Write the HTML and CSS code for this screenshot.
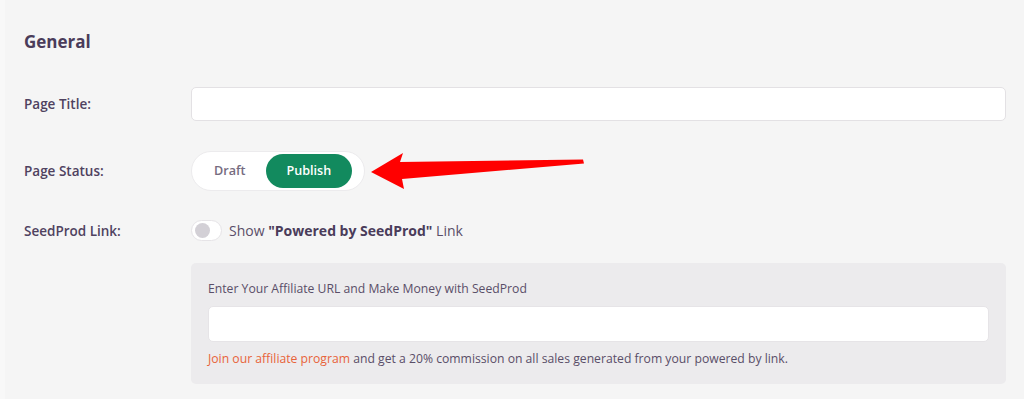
FILE: index.html
```html
<!DOCTYPE html>
<html>
<head>
<meta charset="utf-8">
<link rel="stylesheet" href="styles.css">
</head>
<body>
<div class="page">
  <h2 class="title">General</h2>
  <div class="row row-title">
    <div class="label">Page Title:</div>
    <div class="field"><div class="input"></div></div>
  </div>
  <div class="row row-status">
    <div class="label">Page Status:</div>
    <div class="field">
      <div class="seg">
        <span class="seg-opt">Draft</span>
        <span class="seg-opt active">Publish</span>
      </div>
    </div>
  </div>
  <div class="row row-link">
    <div class="label">SeedProd Link:</div>
    <div class="field switch-line">
      <span class="switch"><span class="knob"></span></span>
      <span class="show">Show <b>"Powered by SeedProd"</b> Link</span>
    </div>
  </div>
  <div class="row row-aff">
    <div class="label"></div>
    <div class="field">
      <div class="aff">
        <div class="aff-label">Enter Your Affiliate URL and Make Money with SeedProd</div>
        <div class="input aff-input"></div>
        <div class="aff-note"><span class="link">Join our affiliate program</span> and get a 20% commission on all sales generated from your powered by link.</div>
      </div>
    </div>
  </div>
  <svg class="arrow" width="1024" height="399" viewBox="0 0 1024 399">
    <polygon points="371,172 403,153 400,162 583,159.5 584,163.5 402,179 404,189" fill="#ff0000"/>
  </svg>
</div>
</body>
</html>
```
FILE: styles.css
```css
html, body {
  margin: 0;
  padding: 0;
}
body {
  background: #f5f5f5;
  font-family: "Open Sans", "Liberation Sans", sans-serif;
  color: #4a3c5a;
  width: 1024px;
  height: 399px;
  overflow: hidden;
}
.page {
  position: relative;
  border-left: 5px solid #f8f8f8;
  padding: 29px 18px 0 19px;
  height: 399px;
  box-sizing: border-box;
}
.title {
  margin: 0;
  font-size: 17px;
  font-weight: 700;
  line-height: 26px;
  color: #4a3c5a;
}
.row {
  display: grid;
  grid-template-columns: 167px 815px;
  align-items: center;
}
.label {
  font-size: 13.5px;
  font-weight: 600;
  color: #4f4260;
}
.row-title {
  margin-top: 32px;
}
.input {
  height: 34px;
  box-sizing: border-box;
  background: #fff;
  border: 1px solid #e3e1e4;
  border-radius: 5px;
}
.row-status {
  margin-top: 30px;
}
.seg {
  display: inline-flex;
  align-items: center;
  background: #fff;
  border: 1px solid #ecebed;
  border-radius: 20px;
  padding: 2px 12px 2px 2px;
  height: 40px;
  box-sizing: border-box;
}
.seg-opt {
  font-size: 12.6px;
  font-weight: 600;
  color: #766c80;
  padding: 0 20px 0 20px;
  line-height: 34px;
}
.seg-opt.active {
  background: #128a5e;
  color: #fff;
  border-radius: 17px;
  padding: 0 21px;
}
.row-link {
  margin-top: 29px;
}
.switch-line {
  display: flex;
  align-items: center;
  gap: 7px;
}
.switch {
  width: 31px;
  height: 21px;
  box-sizing: border-box;
  border: 1px solid #e6e4e7;
  border-radius: 11px;
  background: #fff;
  display: flex;
  align-items: center;
  padding-left: 3px;
}
.knob {
  width: 15px;
  height: 15px;
  border-radius: 50%;
  background: #d3d0d6;
}
.show {
  font-size: 14px;
  color: #5a4e68;
}
.show b {
  font-weight: 700;
  color: #4a3c5a;
}
.row-aff {
  margin-top: 22px;
}
.aff {
  background: #ecebed;
  border-radius: 5px;
  padding: 17px 17px 16px 17px;
  height: 121px;
  box-sizing: border-box;
}
.aff-label {
  font-size: 12.2px;
  color: #5a4e68;
  line-height: 18px;
}
.aff-input {
  margin-top: 8px;
  height: 36px;
  border-color: #e6e4e7;
}
.aff-note {
  margin-top: 8px;
  font-size: 12.2px;
  line-height: 18px;
  color: #5a4e68;
}
.aff-note .link {
  color: #e8633a;
}
.arrow {
  position: absolute;
  left: -5px;
  top: 0;
  pointer-events: none;
}
```
